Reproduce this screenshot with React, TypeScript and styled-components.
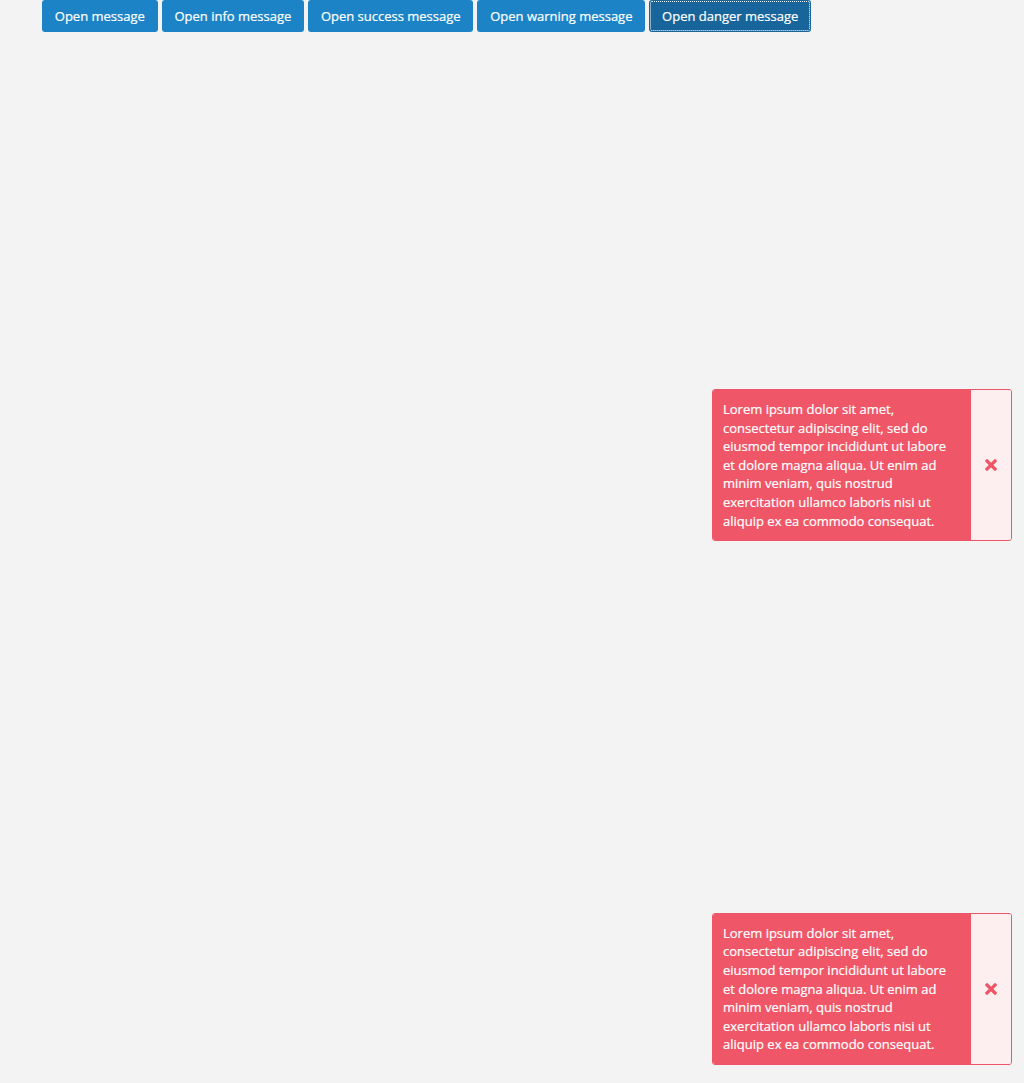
import * as React from 'react';
import styled, { createGlobalStyle } from 'styled-components';

const GlobalStyle = createGlobalStyle`
html, body {
    margin: 0;
    padding: 0;
    background: #f3f3f3;
    font-family: "Open Sans", "Liberation Sans", sans-serif;
}
body {
    height: 1083px;
    overflow: hidden;
}
`;

const Toolbar = styled.div`
display: flex;
gap: 4px;
padding-left: 42px;
`;

const Button = styled.button<{ active?: boolean }>`
height: 32px;
padding: 0 12.8px;
border: none;
border-radius: 3px;
background-color: ${props => props.active ? '#17659a' : '#1c84c6'};
color: white;
font-family: "Open Sans", "Liberation Sans", sans-serif;
font-size: 13px;
-webkit-text-stroke: 0.2px white;
cursor: pointer;
outline: ${props => props.active ? '1px dotted white' : 'none'};
outline-offset: -2px;
`;

const Toast = styled.div<{ top?: number; bottom?: number }>`
position: fixed;
right: 12px;
${props => props.top !== undefined ? `top: ${props.top}px;` : ''}
${props => props.bottom !== undefined ? `bottom: ${props.bottom}px;` : ''}
width: 300px;
display: flex;
border: 1px solid #ee5566;
border-radius: 3px;
box-sizing: border-box;
overflow: hidden;
`;

const ToastText = styled.div`
flex: 1;
background-color: #ef5667;
color: white;
font-size: 13px;
-webkit-text-stroke: 0.2px white;
line-height: 18.6px;
padding: 10px 14px 10px 10px;
`;

const CloseButton = styled.div`
width: 40px;
display: flex;
align-items: center;
justify-content: center;
background-color: #fdeff0;
color: #ee5566;
`;

const LOREM = 'Lorem ipsum dolor sit amet, consectetur adipiscing elit, sed do eiusmod tempor incididunt ut labore et dolore magna aliqua. Ut enim ad minim veniam, quis nostrud exercitation ullamco laboris nisi ut aliquip ex ea commodo consequat.';

const CloseIcon = () => (
    <svg width="12" height="12" viewBox="0 0 12 12">
        <path d="M2 2 L10 10 M10 2 L2 10" stroke="currentColor" strokeWidth="3.2" strokeLinecap="square" />
    </svg>
);

const Message: React.FC<{ top?: number; bottom?: number }> = ({ top, bottom }) => (
    <Toast top={top} bottom={bottom}>
        <ToastText>{LOREM}</ToastText>
        <CloseButton><CloseIcon /></CloseButton>
    </Toast>
);

const App: React.FC = () => {
    return (<>
        <GlobalStyle />
        <Toolbar>
            <Button>Open message</Button>
            <Button>Open info message</Button>
            <Button>Open success message</Button>
            <Button>Open warning message</Button>
            <Button active>Open danger message</Button>
        </Toolbar>
        <Message top={389} />
        <Message bottom={18} />
    </>)
}
export default App
